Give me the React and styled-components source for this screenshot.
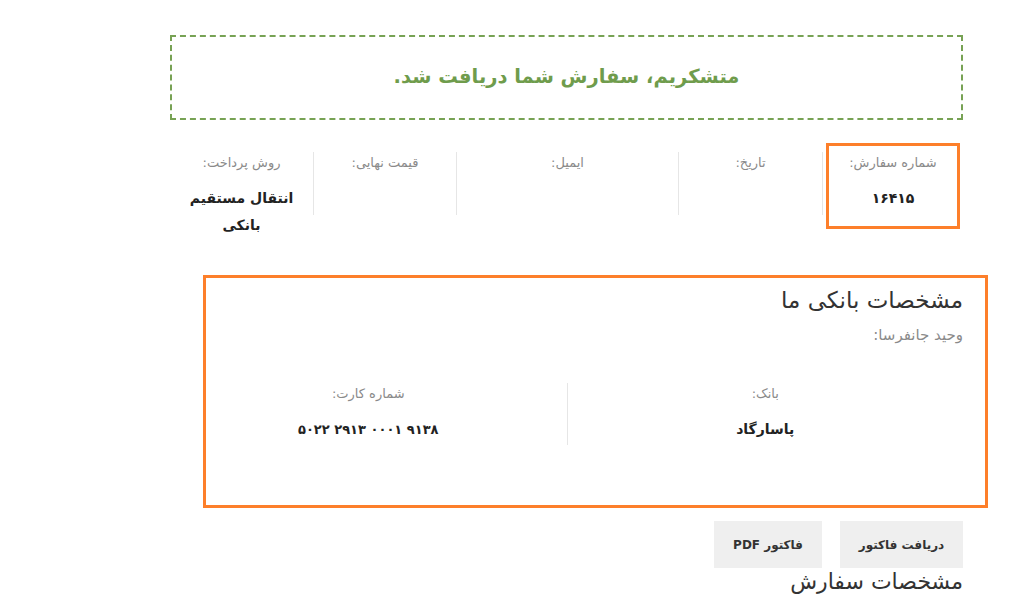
import React from 'react'
import styled, {createGlobalStyle} from 'styled-components'

const GlobalStyle = createGlobalStyle`
    html, body {
        margin: 0;
        padding: 0;
        background: #fff;
    }
    body {
        font-family: "DejaVu Sans", "Noto Sans", sans-serif;
        color: #333;
    }
`

const Page = styled.div`
    direction: rtl;
    width: 793px;
    margin-left: 170px;
    padding-top: 35px;
`

const Notice = styled.div`
    border: 2px dashed #77a254;
    height: 79px;
    padding-bottom: 2px;
    box-sizing: content-box;
    display: flex;
    align-items: center;
    justify-content: center;
    color: #6f9c4c;
    font-size: 19.5px;
    font-weight: 700;
`

const Overview = styled.ul`
    list-style: none;
    margin: 32px 0 0;
    padding: 0;
    display: flex;
    align-items: flex-start;
`

const OverviewItem = styled.li`
    position: relative;
    width: ${p => p.w}px;
    min-height: 63px;
    box-sizing: border-box;
    flex: none;
    text-align: center;
    border-left: ${p => p.last ? 'none' : '1px solid #e6e6e6'};
    padding-bottom: 3px;
`

const Label = styled.div`
    font-size: 13px;
    line-height: 22px;
    color: #8a8a8a;
`

const Value = styled.div`
    margin-top: 11px;
    font-size: 14px;
    font-weight: 700;
    line-height: 27px;
    color: #222;
`

const Highlight = styled.div`
    position: absolute;
    top: ${p => p.t}px;
    right: ${p => p.r}px;
    bottom: ${p => p.b}px;
    left: ${p => p.l}px;
    border: 3px solid #fd7f2a;
    pointer-events: none;
`

const BankSection = styled.section`
    position: relative;
    margin-top: 41px;
    padding-bottom: 63px;
`

const Heading = styled.h2`
    margin: 0;
    font-size: 23px;
    font-weight: 400;
    line-height: 34px;
    color: #333;
`

const BankName = styled.h3`
    margin: 6px 0 0;
    font-size: 15px;
    font-weight: 400;
    line-height: 24px;
    color: #8a8a8a;
`

const BankDetails = styled.ul`
    list-style: none;
    margin: 36px 0 0;
    padding: 0;
    display: grid;
    grid-template-columns: 1fr 1fr;
`

const BankItem = styled.li`
    text-align: center;
    border-left: ${p => p.last ? 'none' : '1px solid #e6e6e6'};
    padding-bottom: 2px;
`

const CardNumber = styled.bdi`
    font-size: 13px;
`

const Actions = styled.div`
    display: flex;
    gap: 18px;
    margin-top: 13px;
`

const Button = styled.a`
    display: flex;
    align-items: center;
    justify-content: center;
    height: 47px;
    width: ${p => p.w}px;
    background: #efefef;
    color: #333;
    font-size: 12px;
    font-weight: 700;
    text-decoration: none;
`

const SubHeading = styled.h2`
    margin: 0;
    font-size: 22px;
    font-weight: 400;
    line-height: 28px;
    color: #333;
`

const overview = [
    {label: 'شماره سفارش:', value: '۱۶۴۱۵', w: 141},
    {label: 'تاریخ:', value: '', w: 144},
    {label: 'ایمیل:', value: '', w: 222},
    {label: 'قیمت نهایی:', value: '', w: 143},
    {label: 'روش پرداخت:', value: 'انتقال مستقیم بانکی', w: 143},
]

const App = () => {
    return (
        <>
            <GlobalStyle />
            <Page>
                <Notice>متشکریم، سفارش شما دریافت شد.</Notice>

                <Overview>
                    {overview.map((item, i) => (
                        <OverviewItem key={i} w={item.w} last={i === overview.length - 1}>
                            <Label>{item.label}</Label>
                            {item.value && <Value>{item.value}</Value>}
                            {i === 0 && <Highlight t={-9} r={3} b={-14} l={3} />}
                        </OverviewItem>
                    ))}
                </Overview>

                <BankSection>
                    <Heading>مشخصات بانکی ما</Heading>
                    <BankName>وحید جانفرسا:</BankName>
                    <BankDetails>
                        <BankItem>
                            <Label>بانک:</Label>
                            <Value>پاسارگاد</Value>
                        </BankItem>
                        <BankItem last>
                            <Label>شماره کارت:</Label>
                            <Value><CardNumber dir="ltr">۵۰۲۲ ۲۹۱۳ ۰۰۰۱ ۹۱۳۸</CardNumber></Value>
                        </BankItem>
                    </BankDetails>
                    <Highlight t={-8} r={-25} b={0} l={33} />
                </BankSection>

                <Actions>
                    <Button href="#" w={123}>دریافت فاکتور</Button>
                    <Button href="#" w={108}>فاکتور PDF</Button>
                </Actions>
                <SubHeading>مشخصات سفارش</SubHeading>
            </Page>
        </>
    )
}

export default App
